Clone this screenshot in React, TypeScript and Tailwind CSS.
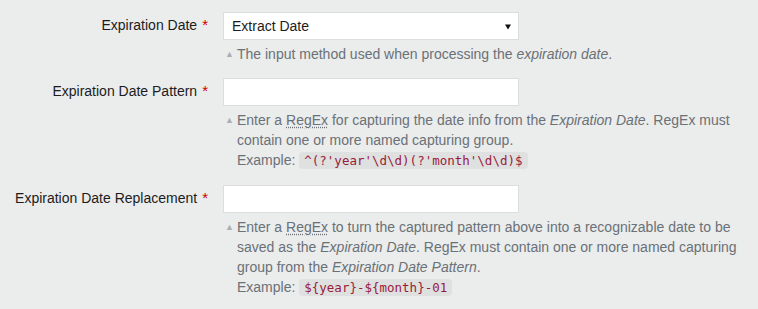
const Required = () => <span className="ml-[5px] text-[15px] text-[#cc0000]">*</span>

const Abbr = ({ children }: { children: string }) => (
  <abbr
    className="underline decoration-dotted decoration-[#6c737a] underline-offset-2"
    title="Regular Expression"
  >
    {children}
  </abbr>
)

const Code = ({ children }: { children: string }) => (
  <code className="rounded-[4px] bg-[#dfe0e0] px-[5px] py-[1px] font-['DejaVu_Sans_Mono',monospace] text-[12.5px] text-[#991b3b]">
    {children}
  </code>
)

const Help = ({ children }: { children: React.ReactNode }) => (
  <div className="mt-1 flex text-[14px] leading-5 text-[#6a7177]">
    <span className="w-[14px] shrink-0 pl-[2px] text-[9px] text-[#a9b0b5]">▲</span>
    <div className="w-[511px]">{children}</div>
  </div>
)

const Row = ({
  label,
  className,
  children,
}: {
  label: string
  className?: string
  children: React.ReactNode
}) => (
  <div className={`flex ${className ?? ''}`}>
    <label className="w-[208px] shrink-0 pt-[3px] text-right text-[14px] leading-5 text-[#1c1c1c]">
      {label}
      <Required />
    </label>
    <div className="ml-[15px] flex flex-col">{children}</div>
  </div>
)

export default function App() {
  return (
    <div className="h-[309px] w-[758px] bg-[#ebecec] pt-3 font-['Liberation_Sans',Arial,sans-serif]">
      <Row label="Expiration Date">
        <div className="flex h-[28px] w-[296px] items-center justify-between border border-[#dcdddd] bg-white pl-2 pr-[7px] text-[14px] text-[#1c1c1c]">
          <span>Extract Date</span>
          <svg width="6" height="6" viewBox="0 0 6 6" className="mt-[1px]">
            <path d="M0 0.5h6L3 5.5z" fill="#111" />
          </svg>
        </div>
        <Help>
          The input method used when processing the <em>expiration date</em>.
        </Help>
      </Row>

      <Row label="Expiration Date Pattern" className="mt-[14px]">
        <div className="h-[28px] w-[296px] border border-[#dcdddd] bg-white" />
        <Help>
          Enter a <Abbr>RegEx</Abbr> for capturing the date info from the <em>Expiration Date</em>. RegEx
          must contain one or more named capturing group.
          <br />
          Example: <Code>{"^(?'year'\\d\\d)(?'month'\\d\\d)$"}</Code>
        </Help>
      </Row>

      <Row label="Expiration Date Replacement" className="mt-[14px]">
        <div className="h-[28px] w-[296px] border border-[#dcdddd] bg-white" />
        <Help>
          Enter a <Abbr>RegEx</Abbr> to turn the captured pattern above into a recognizable date to be
          saved as the <em>Expiration Date</em>. RegEx must contain one or more named capturing group
          from the <em>Expiration Date Pattern</em>.
          <br />
          Example: <Code>{'${year}-${month}-01'}</Code>
        </Help>
      </Row>
    </div>
  )
}
